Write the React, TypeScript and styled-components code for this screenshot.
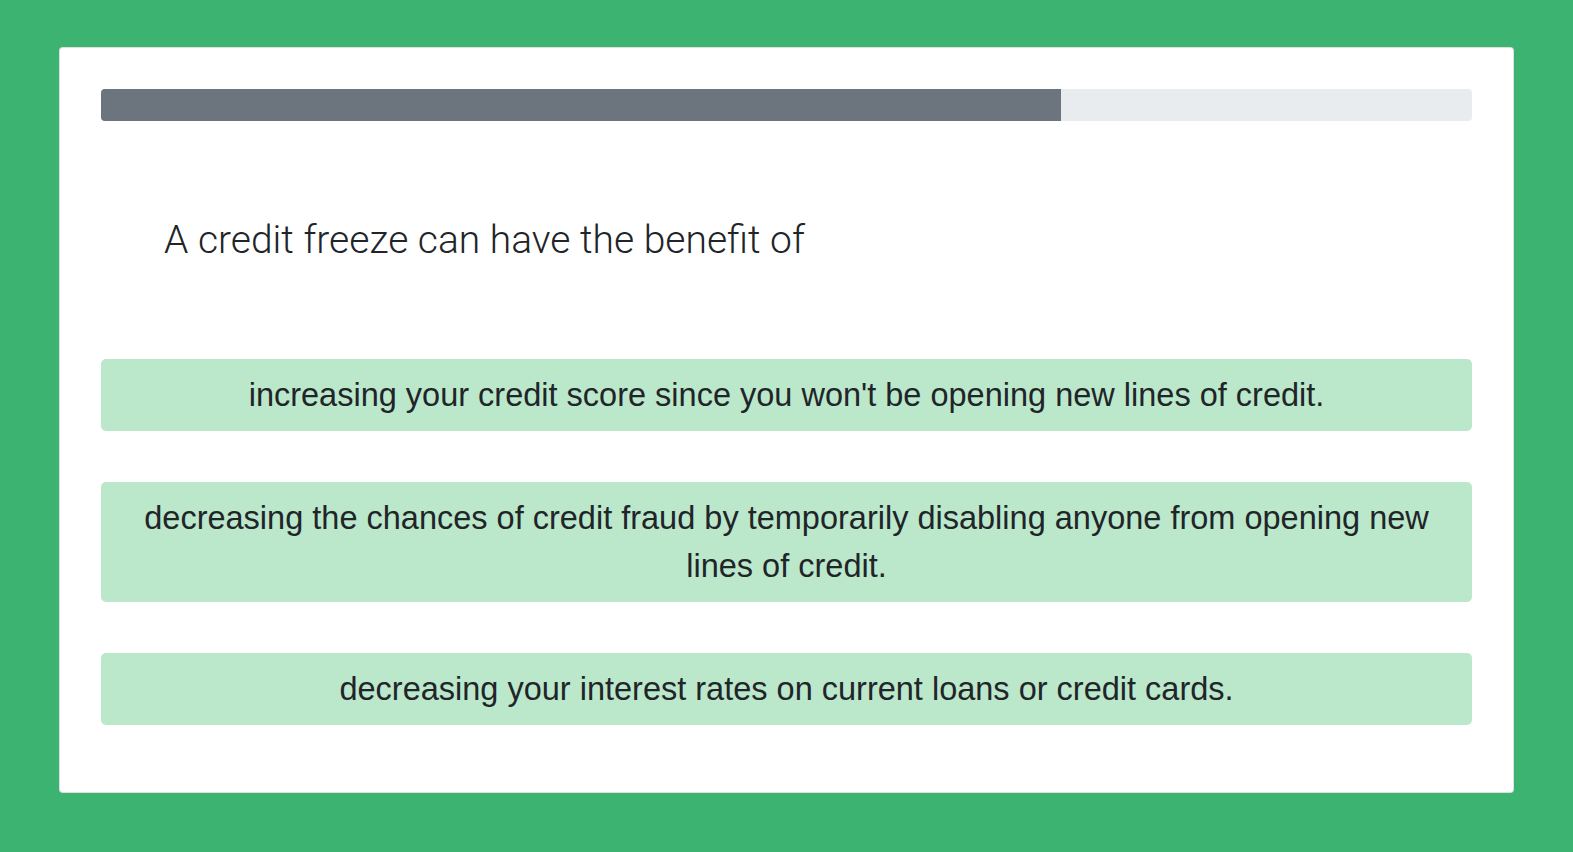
import React from "react";
import styled, { createGlobalStyle } from "styled-components";

const GlobalStyle = createGlobalStyle`
  html, body {
    margin: 0;
    padding: 0;
    background-color: #3cb371;
    color: #212529;
    font-family: "Liberation Sans", Arial, sans-serif;
  }
`;

const Page = styled.div`
  min-height: 852px;
  padding-top: 47px;
  box-sizing: border-box;
  display: flex;
  justify-content: center;
  align-items: flex-start;
`;

const Card = styled.div`
  width: 1455px;
  box-sizing: border-box;
  background: #fff;
  border: 1px solid rgba(0, 0, 0, 0.125);
  border-radius: 4px;
  padding: 41px 41px 67px;
`;

const Track = styled.div`
  height: 32px;
  background: #e9ecef;
  border-radius: 4px;
  overflow: hidden;
  display: flex;
`;

const Fill = styled.div`
  background: #6c757d;
  height: 100%;
`;

const Question = styled.div`
  height: 238px;
  display: flex;
  align-items: center;
  padding-left: 63px;
  font-family: Roboto, "Liberation Sans", sans-serif;
  font-weight: 300;
  font-size: 39px;
  line-height: 1.2;
`;

const Options = styled.div`
  display: flex;
  flex-direction: column;
  gap: 51px;
`;

const Option = styled.button`
  display: block;
  width: 100%;
  border: none;
  border-radius: 5px;
  background: #bbe8cb;
  color: #212529;
  font-family: "Liberation Sans", Arial, sans-serif;
  font-size: 32.5px;
  line-height: 48px;
  padding: 12px 24px;
  text-align: center;
  cursor: pointer;
`;

const answers = [
  "increasing your credit score since you won't be opening new lines of credit.",
  "decreasing the chances of credit fraud by temporarily disabling anyone from opening new lines of credit.",
  "decreasing your interest rates on current loans or credit cards.",
];

export default function App() {
  const progress = 70;
  return (
    <>
      <GlobalStyle />
      <Page>
        <Card>
          <Track>
            <Fill style={{ width: `${progress}%` }} />
          </Track>
          <Question>A credit freeze can have the benefit of</Question>
          <Options>
            {answers.map((a) => (
              <Option key={a}>{a}</Option>
            ))}
          </Options>
        </Card>
      </Page>
    </>
  );
}
